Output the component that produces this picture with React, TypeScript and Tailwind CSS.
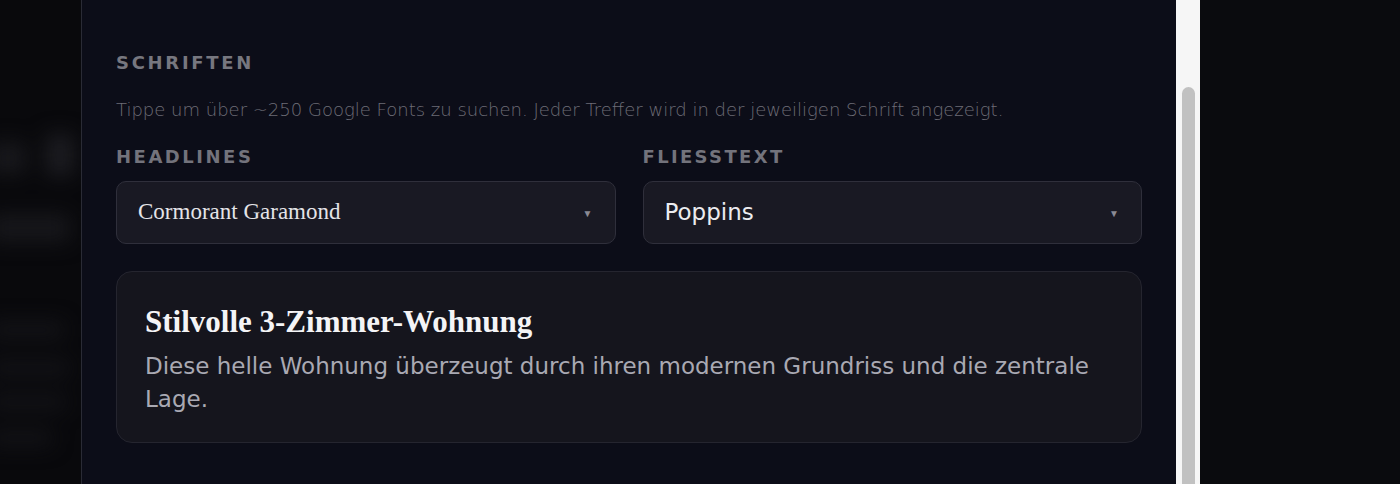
import React from "react";

const wide = "font-['DejaVu_Sans',sans-serif]";
const serif = "font-['Liberation_Serif',serif]";

const FontSelect = ({ value, fontClass }: { value: string; fontClass: string }) => (
    <div className="flex h-[63px] items-center justify-between rounded-[10px] border border-[#2f2f3b] bg-[#191923] pl-[21px] pr-[22px]">
        <span className={fontClass}>{value}</span>
        <span className="text-[10px] leading-none text-[#8a8a94]">▼</span>
    </div>
);

// blurred shapes of the page lying behind the modal
const BackdropLeft = () => (
    <div className="relative w-[81px] shrink-0 overflow-hidden bg-[#09090c]">
        <div className="absolute inset-0 blur-[10px]">
            <div className="absolute left-[-10px] top-[142px] h-[32px] w-[36px] rounded bg-[#18181c]" />
            <div className="absolute left-[46px] top-[134px] h-[42px] w-[28px] rounded bg-[#1c1c21]" />
            <div className="absolute left-[-10px] top-[214px] h-[28px] w-[80px] rounded bg-[#17171b]" />
            <div className="absolute left-[-10px] top-[322px] h-[16px] w-[74px] rounded bg-[#141418]" />
            <div className="absolute left-[-10px] top-[360px] h-[16px] w-[80px] rounded bg-[#131317]" />
            <div className="absolute left-[-10px] top-[394px] h-[16px] w-[76px] rounded bg-[#131317]" />
            <div className="absolute left-[-10px] top-[430px] h-[16px] w-[62px] rounded bg-[#131317]" />
        </div>
    </div>
);

export default function App() {
    return (
        <div className="flex h-[484px] w-[1400px] overflow-hidden bg-[#0a0b0e]">
            <BackdropLeft />

            {/* modal panel */}
            <div className="w-[1095px] shrink-0 border-l border-[#2a2b35] bg-[#0c0d18] px-[34px] pt-[51px]">
                <h2 className={`${wide} text-[18px] font-bold leading-[24px] tracking-[0.15em] text-[#77777f]`}>
                    SCHRIFTEN
                </h2>
                <p className={`mt-[22px] ${wide} text-[18px] font-extralight leading-[26px] text-[#6c6c76]`}>
                    Tippe um über ~250 Google Fonts zu suchen. Jeder Treffer wird in der jeweiligen Schrift angezeigt.
                </p>
                <div className="mt-[22px] grid grid-cols-2 gap-[27px]">
                    <div>
                        <div className={`${wide} text-[18px] font-semibold leading-[24px] tracking-[0.14em] text-[#73737c]`}>
                            HEADLINES
                        </div>
                        <div className="mt-[12px]">
                            <FontSelect value="Cormorant Garamond" fontClass={`${serif} text-[23px] text-[#e4e4e8]`} />
                        </div>
                    </div>
                    <div>
                        <div className={`${wide} text-[18px] font-semibold leading-[24px] tracking-[0.13em] text-[#73737c]`}>
                            FLIESSTEXT
                        </div>
                        <div className="mt-[12px]">
                            <FontSelect value="Poppins" fontClass={`${wide} text-[23px] text-[#ececf0]`} />
                        </div>
                    </div>
                </div>

                <div className="mt-[27px] h-[172px] rounded-[16px] border border-[#25252f] bg-[#15151d] px-[28px] pt-[30px]">
                    <h3 className={`${serif} text-[31px] font-bold leading-[40px] text-[#f4f4f6]`}>
                        Stilvolle 3-Zimmer-Wohnung
                    </h3>
                    <p className={`mt-[8px] ${wide} text-[23px] leading-[33px] text-[#a9a9b3]`}>
                        Diese helle Wohnung überzeugt durch ihren modernen Grundriss und die zentrale Lage.
                    </p>
                </div>
            </div>

            {/* scrollbar */}
            <div className="flex w-[24px] shrink-0 justify-center bg-[#f6f6f6] pt-[87px]">
                <div className="h-full w-[13px] rounded-t-full bg-[#c1c1c1]" />
            </div>

            {/* right side behind the modal */}
            <div className="flex-1 bg-[#0a0b0e]" />
        </div>
    );
}
